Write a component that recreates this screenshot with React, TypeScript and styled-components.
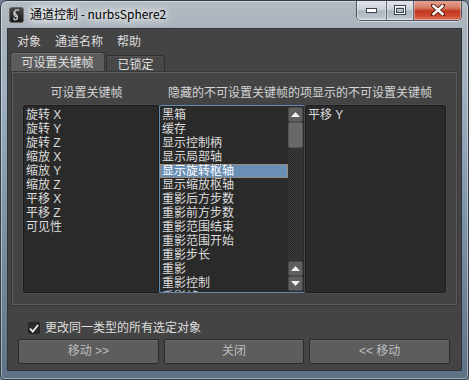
import React from "react";
import styled, { createGlobalStyle } from "styled-components";

const ui = `"Liberation Sans", "Noto Sans CJK SC", sans-serif`;

const GlobalStyle = createGlobalStyle`
  html, body {
    margin: 0;
    padding: 0;
    background: #6d7f91;
  }
  body {
    font-family: ${ui};
  }
`;

const Window = styled.div`
  width: 469px;
  height: 380px;
  box-sizing: border-box;
  border: 1px solid #343e48;
  border-radius: 7px 7px 5px 5px;
  background: linear-gradient(
    180deg,
    #b3bbc3 0px,
    #aab3bc 28px,
    #a0b0bf 90px,
    #8397aa 200px,
    #5f7184 379px
  );
  box-shadow: inset 0 0 0 1px rgba(255, 255, 255, 0.4);
  display: flex;
  flex-direction: column;
  padding: 0 6px 8px 6px;
  overflow: hidden;
`;

const TitleBar = styled.div`
  height: 27px;
  display: flex;
  align-items: flex-start;
  flex-shrink: 0;
`;

const AppIcon = styled.svg`
  margin: 6px 0 0 2px;
  flex-shrink: 0;
`;

const Title = styled.div`
  margin: 5px 0 0 6px;
  font-family: "Noto Sans CJK SC", sans-serif;
  font-size: 12px;
  line-height: 16px;
  color: #000;
  white-space: nowrap;
  text-shadow: 0 0 6px #fff, 0 0 10px #fff, 0 0 14px rgba(255, 255, 255, 0.9);
`;

const Caption = styled.div`
  margin: -1px 0 0 auto;
  display: flex;
  height: 20px;
  border: 1px solid #4c5763;
  border-top: none;
  border-radius: 0 0 5px 5px;
  overflow: hidden;
  box-shadow: 0 1px 0 rgba(255, 255, 255, 0.5);
`;

const CapButton = styled.div<{ $w: number; $close?: boolean }>`
  width: ${(p) => p.$w}px;
  height: 100%;
  display: flex;
  align-items: center;
  justify-content: center;
  box-sizing: border-box;
  border-left: ${(p) => (p.$w === 29 ? "none" : "1px solid #5b6672")};
  background: ${(p) =>
    p.$close
      ? "linear-gradient(180deg, #e7a797 0%, #d47a64 40%, #c2361f 55%, #cc4a30 80%, #e0775a 100%)"
      : "linear-gradient(180deg, #e3e7eb 0%, #cdd3d9 45%, #aeb6bf 55%, #b8c0c8 85%, #cfd5db 100%)"};
  box-shadow: inset 0 0 0 1px rgba(255, 255, 255, 0.35);
`;

const Client = styled.div`
  flex: 1;
  background: #444444;
  border: 1px solid #2c343c;
  display: flex;
  flex-direction: column;
  min-height: 0;
`;

const MenuBar = styled.div`
  height: 23px;
  box-sizing: border-box;
  padding: 2px 0 0 2px;
  display: flex;
  align-items: center;
  flex-shrink: 0;
`;

const MenuItem = styled.div`
  padding: 0 7px;
  font-size: 12px;
  line-height: 16px;
  color: #dedede;
`;

const TabRow = styled.div`
  height: 20px;
  display: flex;
  align-items: flex-end;
  padding-left: 2px;
  flex-shrink: 0;
`;

const Tab = styled.div<{ $active?: boolean }>`
  box-sizing: border-box;
  width: ${(p) => (p.$active ? 95 : 59)}px;
  height: ${(p) => (p.$active ? 20 : 17)}px;
  margin-left: ${(p) => (p.$active ? 0 : 1)}px;
  background: ${(p) => (p.$active ? "#5b5b5b" : "#474747")};
  border: 1px solid ${(p) => (p.$active ? "#363636" : "#303030")};
  border-bottom: none;
  border-radius: 3px 3px 0 0;
  box-shadow: inset 0 1px 0 ${(p) => (p.$active ? "#6e6e6e" : "#555")};
  font-size: 12px;
  line-height: ${(p) => (p.$active ? 20 : 18)}px;
  color: #e0e0e0;
  text-align: center;
`;

const Panel = styled.div`
  height: 233px;
  box-sizing: border-box;
  margin: 0 4px;
  border: 1px solid #5c5c5c;
  box-shadow: 0 0 0 1px #383838;
  padding: 13px 11px 0 10px;
  flex-shrink: 0;
`;

const Columns = "136px 146px 141px";

const HeaderRow = styled.div`
  display: grid;
  grid-template-columns: ${Columns};
  height: 14px;
  margin-bottom: 5px;
  font-size: 12px;
  line-height: 14px;
  color: #d4d4d4;
`;

const HeaderCell = styled.div<{ $span?: boolean }>`
  white-space: nowrap;
  ${(p) =>
    p.$span
      ? "grid-column: 2 / 4; padding-left: 9px;"
      : "text-align: center; padding-right: 9px;"}
`;

const Lists = styled.div`
  display: grid;
  grid-template-columns: ${Columns};
  height: 188px;
`;

const ListBox = styled.div<{ $focused?: boolean }>`
  background: #2a2a2a;
  border: 1px solid ${(p) => (p.$focused ? "#5f8bb5" : "#1d1d1d")};
  border-radius: 2px;
  display: flex;
  overflow: hidden;
  box-shadow: 0 0 0 1px ${(p) => (p.$focused ? "transparent" : "#4a4a4a")};
`;

const Items = styled.div`
  flex: 1;
  padding: 2px 0 0 0;
  overflow: hidden;
  min-width: 0;
`;

const Item = styled.div<{ $selected?: boolean }>`
  height: 14px;
  line-height: 14px;
  padding-left: 2px;
  font-size: 12px;
  white-space: nowrap;
  color: ${(p) => (p.$selected ? "#ffffff" : "#dcdcdc")};
  background: ${(p) => (p.$selected ? "#6a8fb6" : "transparent")};
  outline: ${(p) => (p.$selected ? "1px dotted #c9894a" : "none")};
  outline-offset: -1px;
`;

const ScrollBar = styled.div`
  width: 15px;
  margin: 1px 1px 1px 0;
  display: flex;
  flex-direction: column;
  flex-shrink: 0;
`;

const ScrollButton = styled.div`
  height: 15px;
  box-sizing: border-box;
  background: #5f5f5f;
  border: 1px solid #4b4b4b;
  border-radius: 2px;
  display: flex;
  align-items: center;
  justify-content: center;
  flex-shrink: 0;
`;

const Thumb = styled.div`
  height: 26px;
  box-sizing: border-box;
  background: #686868;
  border: 1px solid #545454;
  border-radius: 2px;
  flex-shrink: 0;
`;

const Track = styled.div`
  flex: 1;
  background-color: #2c2c2c;
  background-image: repeating-conic-gradient(#3b3b3b 0 25%, #2a2a2a 0 50%);
  background-size: 2px 2px;
`;

const Footer = styled.div`
  padding: 17px 11px 0 10px;
  display: flex;
  flex-direction: column;
`;

const CheckRow = styled.div`
  height: 12px;
  display: flex;
  align-items: center;
  gap: 5px;
  margin-left: 10px;
`;

const CheckBox = styled.div`
  width: 12px;
  height: 12px;
  box-sizing: border-box;
  background: #2a2a2a;
  border: 1px solid #232323;
  border-radius: 2px;
  display: flex;
  align-items: center;
  justify-content: center;
`;

const CheckLabel = styled.div`
  font-size: 12px;
  line-height: 14px;
  color: #dedede;
  white-space: nowrap;
`;

const ButtonRow = styled.div`
  margin-top: 5px;
  height: 25px;
  display: grid;
  grid-template-columns: 1fr 1fr 1fr;
  gap: 5px;
`;

const Button = styled.div`
  box-sizing: border-box;
  background: #5d5d5d;
  border: 1px solid #2b2b2b;
  border-radius: 2px;
  box-shadow: inset 0 1px 0 #696969;
  font-size: 12px;
  line-height: 23px;
  color: #bdbdbd;
  text-align: center;
`;

const leftItems = ["旋转 X", "旋转 Y", "旋转 Z", "缩放 X", "缩放 Y", "缩放 Z", "平移 X", "平移 Z", "可见性"];

const hiddenItems = [
  "黑箱",
  "缓存",
  "显示控制柄",
  "显示局部轴",
  "显示旋转枢轴",
  "显示缩放枢轴",
  "重影后方步数",
  "重影前方步数",
  "重影范围结束",
  "重影范围开始",
  "重影步长",
  "重影",
  "重影控制",
  "重影帧",
];

const Arrow = ({ up }: { up?: boolean }) => (
  <svg width="9" height="5" viewBox="0 0 9 5">
    <path d={up ? "M0 5 L4.5 0 L9 5 Z" : "M0 0 L4.5 5 L9 0 Z"} fill="#f0f0f0" />
  </svg>
);

const App = () => {
  return (
    <>
      <GlobalStyle />
      <Window>
        <TitleBar>
          <AppIcon width="15" height="16" viewBox="0 0 15 16">
            <defs>
              <linearGradient id="ic" x1="0" y1="0" x2="0" y2="1">
                <stop offset="0" stopColor="#4a4a4a" />
                <stop offset="1" stopColor="#141414" />
              </linearGradient>
            </defs>
            <rect x="0.5" y="0.5" width="14" height="15" rx="2" fill="url(#ic)" stroke="#6b6b6b" />
            <path
              d="M9.5 3 C6 2.5 4.5 5 6.5 7 C8.5 9 9.5 10.5 7.5 12.5 C6 13.5 4.5 12.5 5 11 M6 4 C4 6 5 9 7 9.5"
              fill="none"
              stroke="#d0d0d0"
              strokeWidth="1.3"
              strokeLinecap="round"
            />
          </AppIcon>
          <Title>通道控制 - nurbsSphere2</Title>
          <Caption>
            <CapButton $w={29}>
              <svg width="11" height="6" viewBox="0 0 11 6">
                <rect x="0.5" y="1.5" width="10" height="4" fill="#fff" stroke="#3a4450" />
              </svg>
            </CapButton>
            <CapButton $w={27}>
              <svg width="12" height="10" viewBox="0 0 12 10">
                <rect x="0.5" y="0.5" width="11" height="9" fill="none" stroke="#3a4450" />
                <rect x="1.5" y="1.5" width="9" height="7" fill="none" stroke="#fff" />
                <rect x="2.5" y="3.5" width="7" height="4" fill="none" stroke="#3a4450" />
              </svg>
            </CapButton>
            <CapButton $w={48} $close>
              <svg width="14" height="12" viewBox="0 0 14 12">
                <path
                  d="M2 1.5 L12 10.5 M12 1.5 L2 10.5"
                  stroke="#5a1a10"
                  strokeWidth="4.2"
                  strokeLinecap="square"
                />
                <path
                  d="M2.5 2 L11.5 10 M11.5 2 L2.5 10"
                  stroke="#fff"
                  strokeWidth="2.4"
                  strokeLinecap="square"
                />
              </svg>
            </CapButton>
          </Caption>
        </TitleBar>

        <Client>
          <MenuBar>
            <MenuItem>对象</MenuItem>
            <MenuItem>通道名称</MenuItem>
            <MenuItem>帮助</MenuItem>
          </MenuBar>

          <TabRow>
            <Tab $active>可设置关键帧</Tab>
            <Tab>已锁定</Tab>
          </TabRow>

          <Panel>
            <HeaderRow>
              <HeaderCell>可设置关键帧</HeaderCell>
              <HeaderCell $span>隐藏的不可设置关键帧的项显示的不可设置关键帧</HeaderCell>
            </HeaderRow>
            <Lists>
              <ListBox>
                <Items>
                  {leftItems.map((t) => (
                    <Item key={t}>{t}</Item>
                  ))}
                </Items>
              </ListBox>
              <ListBox $focused>
                <Items>
                  {hiddenItems.map((t) => (
                    <Item key={t} $selected={t === "显示旋转枢轴"}>
                      {t}
                    </Item>
                  ))}
                </Items>
                <ScrollBar>
                  <ScrollButton>
                    <Arrow up />
                  </ScrollButton>
                  <Thumb />
                  <Track />
                  <ScrollButton>
                    <Arrow up />
                  </ScrollButton>
                  <ScrollButton>
                    <Arrow />
                  </ScrollButton>
                </ScrollBar>
              </ListBox>
              <ListBox>
                <Items>
                  <Item>平移 Y</Item>
                </Items>
              </ListBox>
            </Lists>
          </Panel>

          <Footer>
            <CheckRow>
              <CheckBox>
                <svg width="10" height="9" viewBox="0 0 10 9">
                  <path
                    d="M1 4.5 L3.8 7.5 L9 1"
                    fill="none"
                    stroke="#f2f2f2"
                    strokeWidth="1.8"
                  />
                </svg>
              </CheckBox>
              <CheckLabel>更改同一类型的所有选定对象</CheckLabel>
            </CheckRow>
            <ButtonRow>
              <Button>移动 &gt;&gt;</Button>
              <Button>关闭</Button>
              <Button>&lt;&lt; 移动</Button>
            </ButtonRow>
          </Footer>
        </Client>
      </Window>
    </>
  );
};

export default App;
